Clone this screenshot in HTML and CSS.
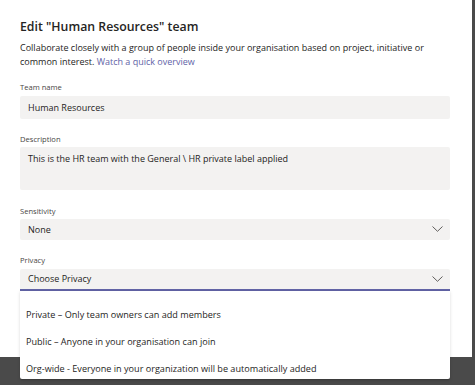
FILE: index.html
```html
<!DOCTYPE html>
<html>
<head>
<meta charset="utf-8">
<link rel="stylesheet" href="styles.css">
</head>
<body>
<div class="dialog">
  <h1 class="title">Edit "Human Resources" team</h1>
  <p class="intro"><span>Collaborate closely with a group of people inside your organisation based on project, initiative or</span><br><span>common interest.</span> <a class="link">Watch a quick overview</a></p>
  <div class="form">
    <div class="group g-name">
      <div class="label">Team name</div>
      <div class="field f-name">Human Resources</div>
    </div>
    <div class="group g-desc">
      <div class="label">Description</div>
      <div class="field f-desc">This is the HR team with the General \ HR private label applied</div>
    </div>
    <div class="group g-sens">
      <div class="label">Sensitivity</div>
      <div class="field f-select f-sens"><span>None</span>
        <svg class="chev" width="11" height="6" viewBox="0 0 11 6"><path d="M0.5 0.5 L5.5 5.3 L10.5 0.5" fill="none" stroke="#605e5c" stroke-width="1"/></svg>
      </div>
    </div>
    <div class="group g-priv">
      <div class="label">Privacy</div>
      <div class="field f-select f-priv"><span>Choose Privacy</span>
        <svg class="chev" width="11" height="6" viewBox="0 0 11 6"><path d="M0.5 0.5 L5.5 5.3 L10.5 0.5" fill="none" stroke="#605e5c" stroke-width="1"/></svg>
      </div>
    </div>
  </div>
</div>
<div class="menu">
  <div class="item">Private – Only team owners can add members</div>
  <div class="item">Public – Anyone in your organisation can join</div>
  <div class="item">Org-wide - Everyone in your organization will be automatically added</div>
</div>
</body>
</html>
```
FILE: styles.css
```css
html, body {
  margin: 0;
  padding: 0;
}
body {
  background: #4a4a4a;
  font-family: "Open Sans", "Noto Sans", sans-serif;
  color: #252423;
  width: 475px;
  height: 385px;
  overflow: hidden;
  position: relative;
}
.dialog {
  width: 472px;
  height: 357px;
  background: #ffffff;
  box-sizing: border-box;
  padding: 18px 22px 0 20px;
  display: flex;
  flex-direction: column;
}
.title {
  margin: 0;
  font-size: 12.3px;
  line-height: 17px;
  font-weight: 600;
  color: #252423;
}
.intro {
  margin: 6px 0 0 0;
  font-size: 9px;
  line-height: 13.5px;
  color: #252423;
  white-space: nowrap;
}
.link {
  color: #6264a7;
}
.form {
  display: flex;
  flex-direction: column;
  margin-top: 12.5px;
}
.group {
  display: flex;
  flex-direction: column;
}
.g-desc { margin-top: 14px; }
.g-sens { margin-top: 15px; }
.g-priv { margin-top: 14px; }
.label {
  font-size: 7.6px;
  line-height: 12px;
  color: #484644;
  margin-bottom: 2px;
}
.field {
  background: #f3f2f1;
  border-radius: 2px;
  font-size: 9px;
  color: #252423;
  box-sizing: border-box;
  padding: 0 8px;
}
.f-name {
  height: 23px;
  line-height: 23px;
  margin-top: 1px;
}
.f-desc {
  height: 43px;
  padding-top: 5px;
  line-height: 13px;
}
.f-select {
  display: flex;
  align-items: center;
  justify-content: space-between;
  padding: 0 7px 0 8px;
}
.f-sens {
  height: 21px;
}
.f-priv {
  height: 22px;
  margin-top: 1px;
  border-bottom: 2px solid #6264a7;
  border-radius: 2px 2px 0 0;
}
.chev {
  display: block;
}
.menu {
  position: absolute;
  left: 20px;
  top: 291px;
  width: 430px;
  height: 88px;
  background: #ffffff;
  box-sizing: border-box;
  padding-top: 10px;
  box-shadow: 0 1.6px 3.6px rgba(0,0,0,0.13), 0 0.3px 0.9px rgba(0,0,0,0.11);
  border-radius: 0 0 2px 2px;
}
.item {
  height: 27px;
  line-height: 27px;
  padding-left: 6px;
  font-size: 9.1px;
  color: #252423;
  white-space: nowrap;
}
```
